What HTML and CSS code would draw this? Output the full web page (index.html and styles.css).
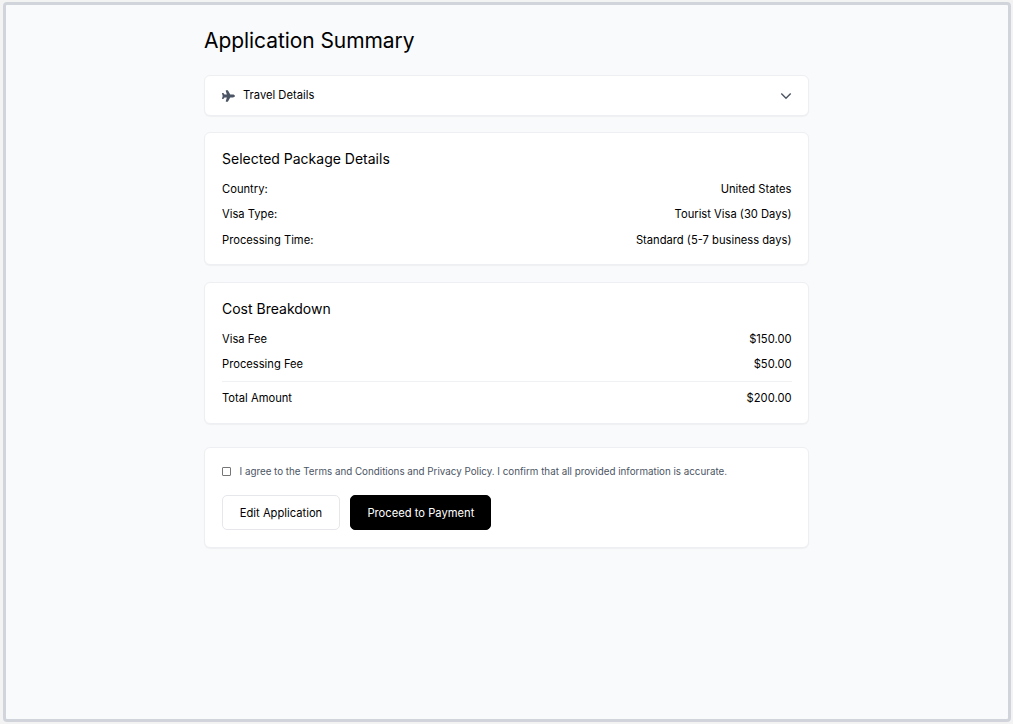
FILE: index.html
```html
<!DOCTYPE html>
<html lang="en">
<head>
<meta charset="utf-8">
<title>Application Summary</title>
<link rel="stylesheet" href="styles.css">
</head>
<body>
<div class="frame">
<main class="summary">
  <h1 class="title">Application Summary</h1>
  <section class="card travel">
    <svg class="plane" viewBox="0 0 576 512"><path fill="currentColor" d="M482.300 192c34.200 0 93.700 29 93.700 64c0 36-59.500 64-93.700 64l-116.600 0L265.200 495.900c-5.700 10-16.300 16.100-27.800 16.100l-56.200 0c-10.600 0-18.300-10.200-15.400-20.400l49-171.600L112 320 68.800 377.600c-3 4-7.800 6.400-12.800 6.400l-42 0c-7.800 0-14-6.300-14-14c0-1.300 .2-2.600 .5-3.900L32 256 .5 145.900c-.4-1.300-.5-2.600-.5-3.900c0-7.800 6.300-14 14-14l42 0c5 0 9.800 2.400 12.800 6.400L112 192l102.900 0-49-171.600C162.900 10.200 170.600 0 181.200 0l56.200 0c11.500 0 22.100 6.200 27.800 16.100L365.700 192l116.600 0z"/></svg>
    <span class="travel-label">Travel Details</span>
    <svg class="chevron" viewBox="0 0 12 12"><path d="M1.300 3.500 6 8.200 10.700 3.500"/></svg>
  </section>
  <section class="card package">
    <h2 class="heading">Selected Package Details</h2>
    <div class="row"><span>Country:</span><span>United States</span></div>
    <div class="row"><span>Visa Type:</span><span>Tourist Visa (30 Days)</span></div>
    <div class="row"><span>Processing Time:</span><span>Standard (5-7 business days)</span></div>
  </section>
  <section class="card cost">
    <h2 class="heading">Cost Breakdown</h2>
    <div class="row"><span>Visa Fee</span><span>$150.00</span></div>
    <div class="row"><span>Processing Fee</span><span>$50.00</span></div>
    <div class="row total"><span>Total Amount</span><span>$200.00</span></div>
  </section>
  <section class="card confirm">
    <label class="agree"><input class="check" type="checkbox"><span>I agree to the Terms and Conditions and Privacy Policy. I confirm that all provided information is accurate.</span></label>
    <div class="actions">
      <button class="button edit">Edit Application</button>
      <button class="button pay">Proceed to Payment</button>
    </div>
  </section>
</main>
</div>
</body>
</html>
```
FILE: styles.css
```css
* { box-sizing: border-box; }
body {
  margin: 0;
  height: 724px;
  padding: 2px 2px 2px 3px;
  overflow: hidden;
  background: #f3f3f4;
  color: #000;
  font: 11.2px/17px Inter, sans-serif;
}
.frame {
  height: 720px;
  border: 3px solid #d1d5db;
  border-radius: 4px;
  background: #f9fafc;
}
.summary { width: 605px; margin-left: 198px; padding-top: 22px; }
.title { margin: 0 0 20px; font-size: 21px; line-height: 28px; font-weight: 400; letter-spacing: -.07px; }
.card {
  padding: 17px 16.500px 17px 17px;
  border: 1px solid #eeeff2;
  border-radius: 6px;
  background: #fff;
  box-shadow: 0 1px 1px rgba(0, 0, 0, .04);
}
.travel { display: flex; align-items: center; height: 41px; margin-bottom: 16px; padding: 0 16px 0 17px; }
.plane { width: 13px; height: 12px; margin-left: -.5px; color: #4b5563; }
.travel-label { margin-left: 8.500px; }
.chevron { width: 12px; height: 12px; margin-left: auto; fill: none; stroke: #4b5563; stroke-width: 1.4; }
.package { height: 133px; margin-bottom: 17px; }
.cost { height: 142px; margin-bottom: 22.500px; }
.heading { margin: -1px 0 12px; font-size: 14px; line-height: 20px; font-weight: 400; }
.row { display: flex; justify-content: space-between; margin-bottom: 8.400px; }
.total { margin-top: -1px; padding-top: 8.500px; border-top: 1px solid #f0f1f3; }
.confirm { height: 101px; }
.agree { display: flex; align-items: center; height: 14px; font-size: 9.800px; line-height: 14px; color: #4b5563; }
.check { appearance: none; width: 9px; height: 9px; margin: -1px 8.500px 0 0; border: 1px solid #767676; border-radius: 1px; }
.actions { display: flex; gap: 10.400px; margin-top: 16px; }
.button { height: 35px; padding: 2.500px 0 0; border: 1px solid #e5e7eb; border-radius: 5px; font: inherit; color: #000; background: #fff; }
.edit { width: 118px; }
.pay { width: 141px; border-color: #000; background: #000; color: #fff; }
```
